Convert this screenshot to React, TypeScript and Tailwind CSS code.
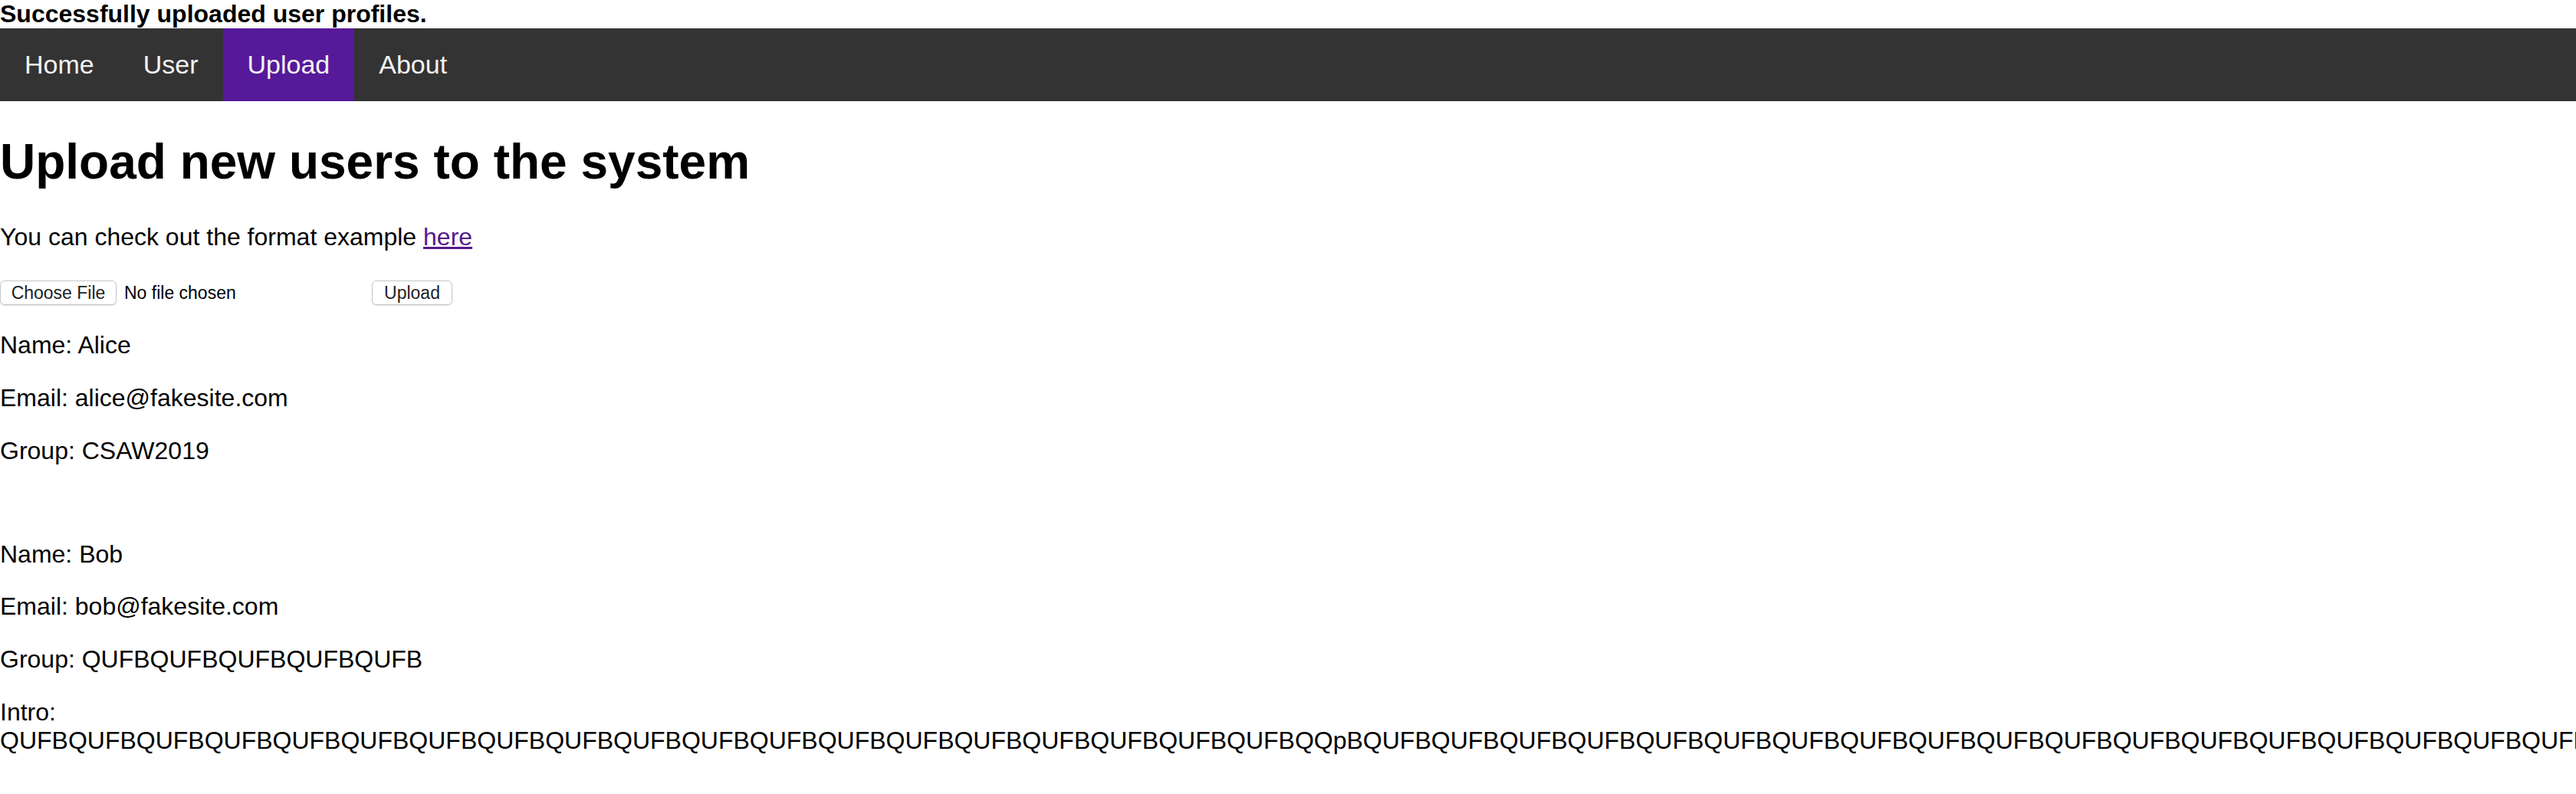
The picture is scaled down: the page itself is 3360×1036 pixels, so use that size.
import React from 'react';

const NAV = ['Home', 'User', 'Upload', 'About'];

// 19 blocks of QUFB, then the newline block, then the rest
const INTRO = 'QUFB'.repeat(19) + 'QQpB' + 'QUFB'.repeat(30);

type Profile = { name: string; email: string; group: string; intro?: string };

const PROFILES: Profile[] = [
  { name: 'Alice', email: 'alice@fakesite.com', group: 'CSAW2019' },
  { name: 'Bob', email: 'bob@fakesite.com', group: 'QUFBQUFBQUFBQUFBQUFB', intro: INTRO },
];

const ProfileBlock: React.FC<{ p: Profile }> = ({ p }) => (
  <div>
    <p className="mt-[32px]">Name: {p.name}</p>
    <p className="mt-[32px]">Email: {p.email}</p>
    <p className="mt-[32px]">Group: {p.group}</p>
    {p.intro && <p className="mt-[32px]">Intro: {p.intro}</p>}
  </div>
);

export default function App() {
  return (
    <div className="min-h-screen overflow-hidden bg-white text-black font-['Liberation_Sans',Arial,sans-serif] text-[32px] leading-[36.8px]">
      <div className="font-bold">Successfully uploaded user profiles.</div>

      {/* top nav */}
      <nav className="flex bg-[#333333]">
        {NAV.map(item => (
          <a
            key={item}
            className={`px-[32px] py-[28px] text-[34px] leading-[39px] text-[#f2f2f2] ${item === 'Upload' ? 'bg-[#56199a]' : ''}`}
          >
            {item}
          </a>
        ))}
      </nav>

      <h1 className="mt-[43px] text-[64px] font-bold leading-[73.6px]">Upload new users to the system</h1>

      <p className="mt-[43px]">
        You can check out the format example <a className="text-[#551a8b] underline">here</a>
      </p>

      {/* file input + submit */}
      <form className="mt-[32px] flex h-[40px] items-start pt-[6px] text-[23px] leading-[26px]">
        <div className="flex w-[485px] items-center">
          <button
            type="button"
            className="h-[32px] w-[152px] rounded-[6px] border border-[#c6c6c6] bg-white text-center text-[#222222] shadow-[0_1px_1px_rgba(0,0,0,0.12)]"
          >
            Choose File
          </button>
          <span className="ml-[10px]">No file chosen</span>
        </div>
        <button
          type="button"
          className="h-[32px] w-[105px] rounded-[6px] border border-[#c6c6c6] bg-white text-center text-[#222222] shadow-[0_1px_1px_rgba(0,0,0,0.12)]"
        >
          Upload
        </button>
      </form>

      <ProfileBlock p={PROFILES[0]} />
      <div className="h-[66px]" />
      <ProfileBlock p={PROFILES[1]} />
    </div>
  );
}
